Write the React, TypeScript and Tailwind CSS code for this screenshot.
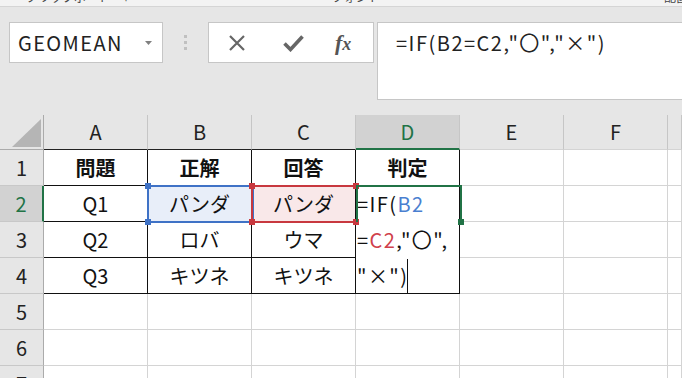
import React from "react";

const FONT = "font-['Noto_Sans_CJK_JP','Noto_Sans',sans-serif]";

const colLetters = ["A", "B", "C", "D", "E", "F", ""];

const data: (string | null)[][] = [
  ["問題", "正解", "回答", "判定"],
  ["Q1", "パンダ", "パンダ", null],
  ["Q2", "ロバ", "ウマ", null],
  ["Q3", "キツネ", "キツネ", null],
];

function Handle({ x, y, color }: { x: number; y: number; color: string }) {
  return (
    <div
      className="absolute w-[6px] h-[6px]"
      style={{ left: x - 3, top: y - 3, backgroundColor: color }}
    />
  );
}

export default function App() {
  const rows = [1, 2, 3, 4, 5, 6, 7];
  const cells: React.ReactNode[] = [];

  cells.push(
    <div
      key="corner"
      className="relative bg-[#e6e6e6] border-r border-b border-[#ababab]"
    >
      <svg className="absolute left-[12px] top-[4px]" width="30" height="29" viewBox="0 0 30 29">
        <polygon points="29,0 29,28 0,28" fill="#b5b5b5" />
      </svg>
    </div>
  );
  colLetters.forEach((c, i) => {
    const isD = i === 3;
    let bottom = "border-b border-b-[#d4d4d4]";
    if (i < 3) bottom = "border-b border-b-[#222]";
    if (isD) bottom = "border-b-2 border-b-[#217346]";
    cells.push(
      <div
        key={"h" + i}
        className={`flex items-center justify-center text-[20px] border-r border-r-[#c6c6c6] ${bottom} ${
          isD ? "bg-[#d2d2d2] text-[#217346]" : "bg-[#e6e6e6] text-[#222]"
        }`}
      >
        {c}
      </div>
    );
  });

  rows.forEach((r) => {
    const isSel = r === 2;
    cells.push(
      <div
        key={"r" + r}
        className={`flex items-center justify-center text-[20px] border-b border-b-[#c8c8c8] ${
          isSel
            ? "bg-[#d2d2d2] text-[#217346] border-r-2 border-r-[#217346]"
            : "bg-[#e6e6e6] text-[#222] border-r border-r-[#ababab]"
        }`}
      >
        {r}
      </div>
    );
    for (let c = 0; c < 7; c++) {
      const inTable = r <= 4 && c <= 3;
      if (c === 3 && (r === 3 || r === 4)) continue;
      if (c === 3 && r === 2) {
        cells.push(
          <div
            key={"d2"}
            className="row-span-3 border-r border-b border-[#111] bg-white flex flex-col text-[20px] text-[#111] pl-[1px] tracking-[1.4px]"
          >
            <div className="h-[36px] flex items-center">
              <span>=IF(</span>
              <span className="text-[#4a7fd0]">B2</span>
            </div>
            <div className="h-[36px] flex items-center">
              <span>=</span>
              <span className="text-[#d0404b]">C2</span>
              <span>,"〇",</span>
            </div>
            <div className="h-[35px] flex items-center">
              <span>"×")</span>
            </div>
          </div>
        );
        continue;
      }
      let text: React.ReactNode = null;
      let bold = false;
      let bg = "bg-white";
      if (inTable) {
        text = data[r - 1][c];
        bold = r === 1;
        if (r === 2 && c === 1) bg = "bg-[#e8eef9]";
        if (r === 2 && c === 2) bg = "bg-[#f9e8e9]";
      }
      const border = inTable
        ? "border-r border-b border-[#111]"
        : "border-r border-b border-[#d4d4d4]";
      cells.push(
        <div
          key={`c${r}-${c}`}
          className={`flex items-center justify-center text-[20px] text-[#111] ${border} ${bg} ${
            bold ? "font-bold" : ""
          }`}
        >
          {text}
        </div>
      );
    }
  });

  return (
    <div className={`w-[682px] h-[378px] overflow-hidden bg-[#e6e6e6] ${FONT}`}>
      {/* ribbon bottom strip */}
      <div className="h-[7px] bg-[#f3f3f3] border-b border-[#d5d5d5] overflow-hidden flex text-[12px] text-[#444] leading-[14px]">
        <span className="ml-[26px] -mt-[10px]">クリップボード　 ⌐</span>
        <span className="ml-[200px] -mt-[10px]">フォント</span>
        <span className="ml-auto mr-[-6px] -mt-[10px]">配置</span>
      </div>

      {/* formula bar */}
      <div className="h-[108px] flex items-start pt-[15px]">
        <div className="ml-[9px] w-[154px] h-[41px] bg-white border border-[#c6c6c6] flex items-center pl-[8px] pr-[10px]">
          <span className="text-[20px] text-[#222] tracking-[1.4px]">GEOMEAN</span>
          <svg className="ml-auto" width="7" height="4" viewBox="0 0 7 4">
            <polygon points="0,0 7,0 3.5,4" fill="#808080" />
          </svg>
        </div>
        <div className="w-[45px] h-[41px] flex flex-col items-center justify-center gap-[3px]">
          <div className="w-[3px] h-[3px] bg-[#c0c0c0]" />
          <div className="w-[3px] h-[3px] bg-[#c0c0c0]" />
          <div className="w-[3px] h-[3px] bg-[#c0c0c0]" />
        </div>
        <div className="w-[166px] h-[41px] bg-white border border-[#c6c6c6] flex items-center">
          <svg className="ml-[19px]" width="18" height="18" viewBox="0 0 18 18">
            <path d="M2 2 L16 16 M16 2 L2 16" stroke="#666" strokeWidth="2.2" />
          </svg>
          <svg className="ml-[37px]" width="21" height="18" viewBox="0 0 21 18">
            <path d="M1.5 9.5 L7.5 15.5 L19.5 2.5" stroke="#666" strokeWidth="3.6" fill="none" strokeLinejoin="miter" />
          </svg>
          <span className="ml-[31px] font-['Liberation_Serif',serif] italic font-bold text-[22px] text-[#555] leading-none">
            f<span className="text-[18px]">x</span>
          </span>
        </div>
        <div className="ml-[3px] flex-1 h-[78px] bg-white border border-[#c6c6c6] border-r-0 pl-[18px] pt-[5px]">
          <span className="text-[20px] text-[#222] tracking-[1.5px]">=IF(B2=C2,"〇","×")</span>
        </div>
      </div>

      {/* grid */}
      <div className="relative grid grid-cols-[44px_104px_104px_104px_104px_104px_104px_1fr] grid-rows-[35px_36px_36px_36px_36px_36px_36px_36px]">
        {cells}

        <div className="absolute left-[147px] top-[70px] w-[107px] h-[38px] border-2 border-[#3f72c6]" />
        <Handle x={148} y={71} color="#3f72c6" />
        <Handle x={148} y={107} color="#3f72c6" />

        <div className="absolute left-[251px] top-[70px] w-[107px] h-[38px] border-2 border-[#c8383f]" />
        <Handle x={252} y={71} color="#c8383f" />
        <Handle x={252} y={107} color="#c8383f" />
        <Handle x={356} y={71} color="#c8383f" />
        <Handle x={356} y={107} color="#c8383f" />

        <div className="absolute left-[356px] top-[70px] w-[106px] h-[37px] border-t-2 border-l-2 border-r-2 border-[#217346]" />
        <div className="absolute left-[458px] top-[104px] w-[6px] h-[6px] bg-[#217346]" />

        <div className="absolute left-[407px] top-[144px] w-px h-[35px] bg-[#111]" />
      </div>
    </div>
  );
}
